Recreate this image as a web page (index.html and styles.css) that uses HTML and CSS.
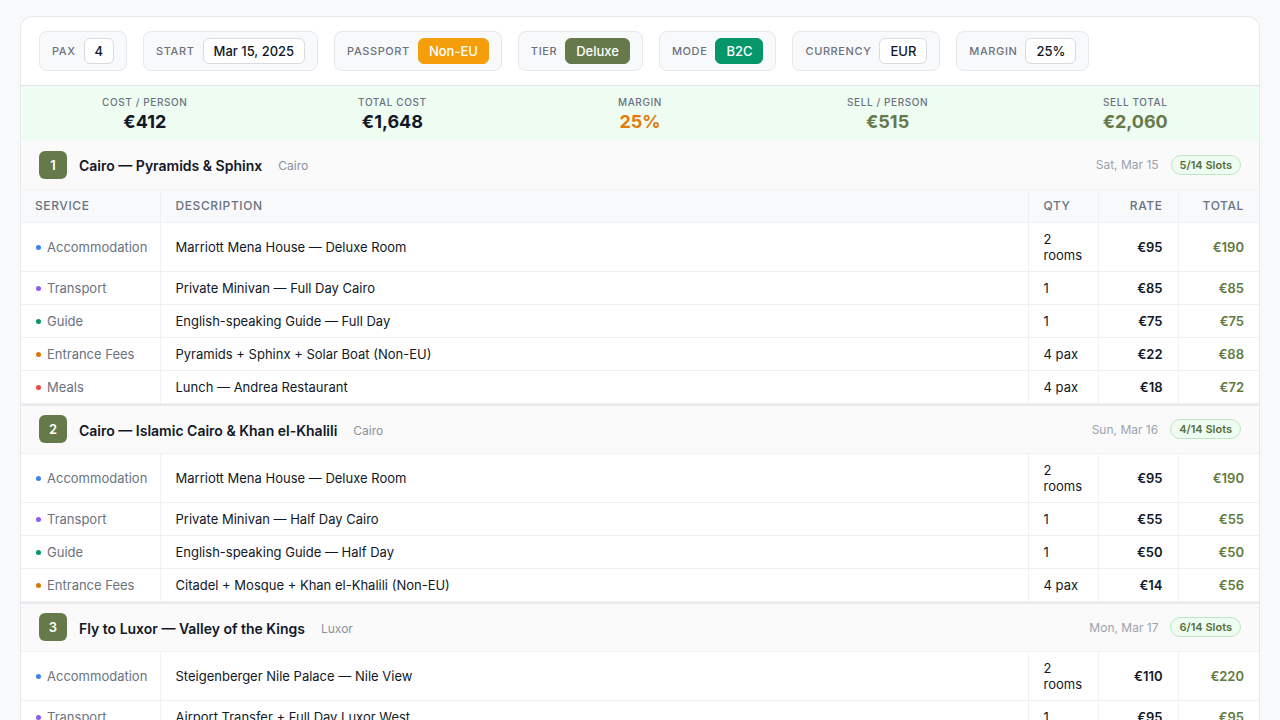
FILE: index.html
```html
<!DOCTYPE html>
<html lang="en">
<head>
  <meta charset="UTF-8">
  <meta name="viewport" content="width=device-width, initial-scale=1.0">
  <title>Itinerary Costing</title>
  <link rel="stylesheet" href="styles.css">
</head>
<body>
  <div class="sheet">
    <div class="toolbar">
      <div class="chip"><span class="chip-label">Pax</span><span class="chip-value">4</span></div>
      <div class="chip"><span class="chip-label">Start</span><span class="chip-value">Mar 15, 2025</span></div>
      <div class="chip"><span class="chip-label">Passport</span><span class="chip-value fill-orange">Non-EU</span></div>
      <div class="chip"><span class="chip-label">Tier</span><span class="chip-value fill-olive">Deluxe</span></div>
      <div class="chip"><span class="chip-label">Mode</span><span class="chip-value fill-green">B2C</span></div>
      <div class="chip"><span class="chip-label">Currency</span><span class="chip-value">EUR</span></div>
      <div class="chip"><span class="chip-label">Margin</span><span class="chip-value">25%</span></div>
    </div>

    <div class="summary">
      <div class="stat"><div class="stat-label">Cost / Person</div><div class="stat-value">€412</div></div>
      <div class="stat"><div class="stat-label">Total Cost</div><div class="stat-value">€1,648</div></div>
      <div class="stat"><div class="stat-label">Margin</div><div class="stat-value orange">25%</div></div>
      <div class="stat"><div class="stat-label">Sell / Person</div><div class="stat-value olive">€515</div></div>
      <div class="stat"><div class="stat-label">Sell Total</div><div class="stat-value olive">€2,060</div></div>
    </div>

    <div class="day first">
      <div class="day-num">1</div>
      <div class="day-title">Cairo — Pyramids &amp; Sphinx</div>
      <div class="day-city">Cairo</div>
      <div class="day-date">Sat, Mar 15</div>
      <div class="slots">5/14 Slots</div>
    </div>
    <table class="lines">
      <colgroup>
        <col class="c-service"><col><col class="c-qty"><col class="c-rate"><col class="c-total">
      </colgroup>
      <thead>
        <tr><th>Service</th><th>Description</th><th>Qty</th><th class="num">Rate</th><th class="num">Total</th></tr>
      </thead>
      <tbody>
        <tr><td class="svc"><i class="dot blue"></i>Accommodation</td><td>Marriott Mena House — Deluxe Room</td><td>2 rooms</td><td class="rate">€95</td><td class="total">€190</td></tr>
        <tr><td class="svc"><i class="dot purple"></i>Transport</td><td>Private Minivan — Full Day Cairo</td><td>1</td><td class="rate">€85</td><td class="total">€85</td></tr>
        <tr><td class="svc"><i class="dot green"></i>Guide</td><td>English-speaking Guide — Full Day</td><td>1</td><td class="rate">€75</td><td class="total">€75</td></tr>
        <tr><td class="svc"><i class="dot orange"></i>Entrance Fees</td><td>Pyramids + Sphinx + Solar Boat (Non-EU)</td><td>4 pax</td><td class="rate">€22</td><td class="total">€88</td></tr>
        <tr><td class="svc"><i class="dot red"></i>Meals</td><td>Lunch — Andrea Restaurant</td><td>4 pax</td><td class="rate">€18</td><td class="total">€72</td></tr>
      </tbody>
    </table>

    <div class="day">
      <div class="day-num">2</div>
      <div class="day-title">Cairo — Islamic Cairo &amp; Khan el-Khalili</div>
      <div class="day-city">Cairo</div>
      <div class="day-date">Sun, Mar 16</div>
      <div class="slots">4/14 Slots</div>
    </div>
    <table class="lines">
      <colgroup>
        <col class="c-service"><col><col class="c-qty"><col class="c-rate"><col class="c-total">
      </colgroup>
      <tbody>
        <tr><td class="svc"><i class="dot blue"></i>Accommodation</td><td>Marriott Mena House — Deluxe Room</td><td>2 rooms</td><td class="rate">€95</td><td class="total">€190</td></tr>
        <tr><td class="svc"><i class="dot purple"></i>Transport</td><td>Private Minivan — Half Day Cairo</td><td>1</td><td class="rate">€55</td><td class="total">€55</td></tr>
        <tr><td class="svc"><i class="dot green"></i>Guide</td><td>English-speaking Guide — Half Day</td><td>1</td><td class="rate">€50</td><td class="total">€50</td></tr>
        <tr><td class="svc"><i class="dot orange"></i>Entrance Fees</td><td>Citadel + Mosque + Khan el-Khalili (Non-EU)</td><td>4 pax</td><td class="rate">€14</td><td class="total">€56</td></tr>
      </tbody>
    </table>

    <div class="day">
      <div class="day-num">3</div>
      <div class="day-title">Fly to Luxor — Valley of the Kings</div>
      <div class="day-city">Luxor</div>
      <div class="day-date">Mon, Mar 17</div>
      <div class="slots">6/14 Slots</div>
    </div>
    <table class="lines">
      <colgroup>
        <col class="c-service"><col><col class="c-qty"><col class="c-rate"><col class="c-total">
      </colgroup>
      <tbody>
        <tr><td class="svc"><i class="dot blue"></i>Accommodation</td><td>Steigenberger Nile Palace — Nile View</td><td>2 rooms</td><td class="rate">€110</td><td class="total">€220</td></tr>
        <tr><td class="svc"><i class="dot purple"></i>Transport</td><td>Airport Transfer + Full Day Luxor West</td><td>1</td><td class="rate">€95</td><td class="total">€95</td></tr>
        <tr><td class="svc"><i class="dot green"></i>Guide</td><td>Egyptologist Guide — Full Day</td><td>1</td><td class="rate">€75</td><td class="total">€75</td></tr>
      </tbody>
    </table>
  </div>
</body>
</html>
```

FILE: styles.css
```css
* {
  box-sizing: border-box;
}

body {
  margin: 16px 20px 0;
  background-color: #f8f9fb;
  font-family: Inter, "Liberation Sans", sans-serif;
  color: #111827;
}

.sheet {
  background-color: #fff;
  border: 1px solid #e5e7eb;
  border-radius: 12px;
  overflow: hidden;
}

/* toolbar */

.toolbar {
  display: flex;
  gap: 16px;
  padding: 14px 18px;
  border-bottom: 1px solid #e5e7eb;
}

.chip {
  display: flex;
  align-items: center;
  gap: 8px;
  padding: 6px 12px;
  background-color: #f8f9fb;
  border: 1px solid #e5e7eb;
  border-radius: 8px;
}

.chip-label {
  font-size: 11px;
  font-weight: 500;
  letter-spacing: 0.6px;
  text-transform: uppercase;
  color: #6b7280;
}

.chip-value {
  display: block;
  height: 26px;
  padding: 2px 10px;
  font-size: 13px;
  font-weight: 500;
  line-height: 20px;
  background-color: #fff;
  border: 1px solid #d8dbe0;
  border-radius: 6px;
}

.chip-value.fill-orange {
  background-color: #f59e0b;
  border-color: #f59e0b;
  color: #fff;
}

.chip-value.fill-olive {
  background-color: #66794a;
  border-color: #66794a;
  color: #fff;
}

.chip-value.fill-green {
  background-color: #059669;
  border-color: #059669;
  color: #fff;
}

/* summary */

.summary {
  display: grid;
  grid-template-columns: repeat(5, 1fr);
  height: 54px;
  padding-top: 10px;
  background-color: #effcf2;
}

.stat {
  text-align: center;
}

.stat-label {
  font-size: 10px;
  font-weight: 500;
  letter-spacing: 0.6px;
  line-height: 12px;
  text-transform: uppercase;
  color: #6b7280;
}

.stat-value {
  margin-top: 2px;
  font-size: 18px;
  font-weight: 700;
  line-height: 24px;
  color: #111827;
}

.stat-value.orange {
  color: #e07b0c;
}

.stat-value.olive {
  color: #66794a;
}

/* day header */

.day {
  display: flex;
  align-items: center;
  gap: 12px;
  height: 50px;
  padding: 0 18px;
  background-color: #fafafa;
  border-top: 2px solid #e9eaed;
  border-bottom: 1px solid #f0f1f3;
}

.day.first {
  height: 50px;
  border-top: 0;
}

.day-num {
  width: 28px;
  height: 28px;
  border-radius: 6px;
  background-color: #66794a;
  color: #fff;
  font-size: 13px;
  font-weight: 600;
  line-height: 28px;
  text-align: center;
}

.day-title {
  padding-top: 2px;
  font-size: 14px;
  font-weight: 600;
  color: #111827;
}

.day-city {
  margin-left: 4px;
  padding-top: 2px;
  font-size: 12px;
  color: #8b919b;
}

.day-date {
  margin-left: auto;
  font-size: 12px;
  color: #9ca3af;
}

.slots {
  height: 20px;
  padding: 0 8px;
  font-size: 11px;
  font-weight: 600;
  line-height: 18px;
  color: #55703a;
  background-color: #effcf2;
  border: 1px solid #bfe6c4;
  border-radius: 10px;
}

/* line items */

.lines {
  width: 100%;
  table-layout: fixed;
  border-collapse: collapse;
  font-size: 13px;
  line-height: 16px;
}

.c-service {
  width: 139px;
}

.c-qty {
  width: 70px;
}

.c-rate {
  width: 80px;
}

.c-total {
  width: 81px;
}

.lines th {
  height: 32px;
  padding: 1px 15px 0 14px;
  text-align: left;
  font-size: 12px;
  font-weight: 500;
  letter-spacing: 0.6px;
  text-transform: uppercase;
  color: #6b7280;
  background-color: #f8f9fb;
  border-right: 1px solid #eef0f2;
  border-bottom: 1px solid #eef0f2;
}

.lines th + th {
  padding-left: 15px;
}

.lines td {
  padding: 8px 15px;
  vertical-align: middle;
  color: #111827;
  border-right: 1px solid #f0f1f3;
  border-bottom: 1px solid #f0f1f3;
}

.lines th:last-child,
.lines td:last-child {
  border-right: 0;
}

.lines .num {
  text-align: right;
}

.lines td.svc {
  color: #6b7280;
  white-space: nowrap;
}

.dot {
  display: inline-block;
  width: 5px;
  height: 5px;
  margin-right: 6px;
  border-radius: 50%;
  vertical-align: 2px;
}

.dot.blue { background-color: #3b82f6; }
.dot.purple { background-color: #8b5cf6; }
.dot.green { background-color: #059669; }
.dot.orange { background-color: #d97706; }
.dot.red { background-color: #ef4444; }

.lines td.rate {
  text-align: right;
  font-weight: 600;
}

.lines td.total {
  text-align: right;
  font-weight: 600;
  color: #5f7a3c;
}
```
